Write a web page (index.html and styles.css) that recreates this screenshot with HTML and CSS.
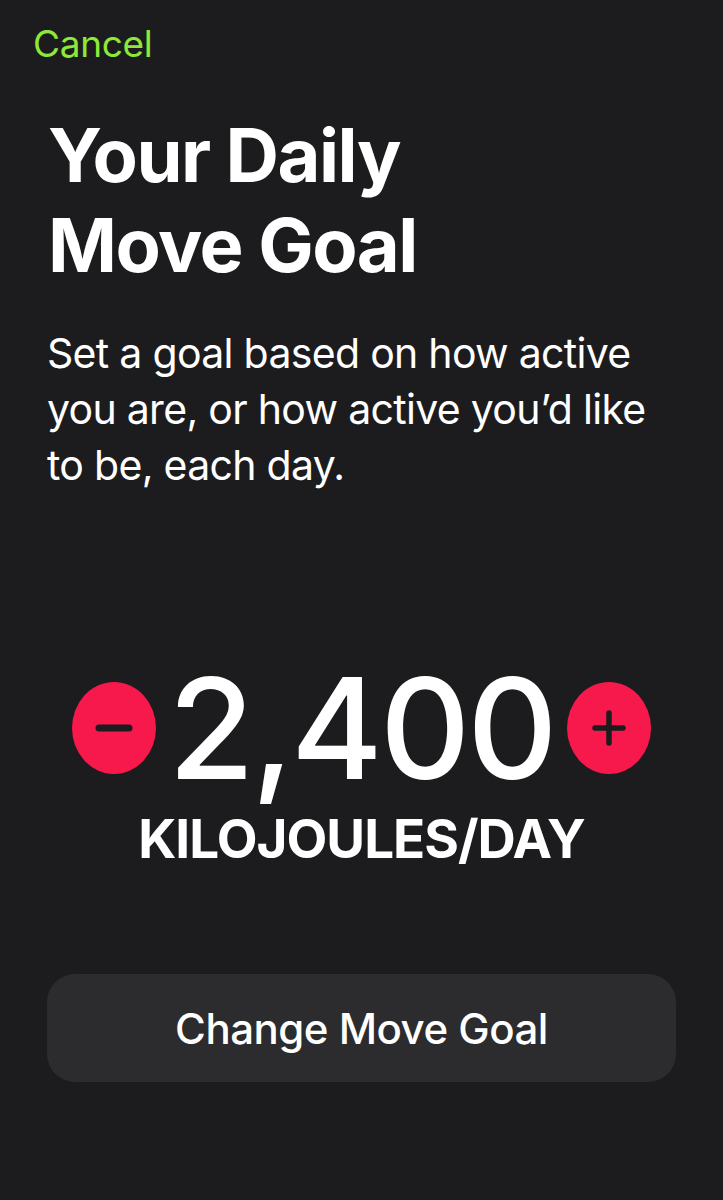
FILE: index.html
```html
<!DOCTYPE html>
<html lang="en">
<head>
    <meta charset="UTF-8">
    <title>Move Goal</title>
    <link rel="stylesheet" href="styles.css">
</head>
<body>
    <div class="screen">
        <a class="cancel" href="javascript:;">Cancel</a>

        <h1 class="goal-title">Your Daily<br>Move Goal</h1>
        <p class="goal-desc">Set a goal based on how active you are, or how active you’d like to be, each day.</p>

        <div class="goal-picker">
            <div class="goal-row">
                <a class="step-btn" href="javascript:;" id="minusBtn">
                    <svg width="40" height="40" viewBox="0 0 40 40"><path d="M5 20H35" stroke="#1c1c1e" stroke-width="7" stroke-linecap="round"/></svg>
                </a>
                <span class="goal-value" id="goalValue">2,400</span>
                <a class="step-btn" href="javascript:;" id="plusBtn">
                    <svg width="40" height="40" viewBox="0 0 40 40"><path d="M6 20H34M20 5V35" stroke="#1c1c1e" stroke-width="5.5" stroke-linecap="round"/></svg>
                </a>
            </div>
            <div class="goal-unit">KILOJOULES/DAY</div>
        </div>

        <div class="change-btn"><a href="javascript:;">Change Move Goal</a></div>
    </div>
</body>
</html>
```

FILE: styles.css
```css
html,
body{
    margin: 0;
    padding: 0;
    background-color: #1c1c1e;
}
a{
    text-decoration: none;
}
.screen{
    width: 723px;
    height: 1200px;
    font-family: Inter, "Noto Sans", sans-serif;
    color: #ffffff;
    overflow: hidden;
}
.cancel{
    display: block;
    margin: 22px 0 0 33px;
    font-size: 37px;
    line-height: 44px;
    color: #8ee83a;
    letter-spacing: -0.3px;
}
.goal-title{
    margin: 44px 0 0 48px;
    font-size: 74px;
    line-height: 90px;
    font-weight: 700;
    letter-spacing: -1.5px;
}
.goal-desc{
    margin: 35px 70px 0 47px;
    font-size: 41px;
    line-height: 56px;
    letter-spacing: -0.7px;
}
.goal-picker{
    margin-top: 165px;
    text-align: center;
}
.goal-row{
    display: flex;
    justify-content: center;
    align-items: center;
    gap: 12px;
}
.step-btn{
    width: 84px;
    height: 92px;
    border-radius: 50%;
    background-color: #f7194c;
    display: flex;
    justify-content: center;
    align-items: center;
}
.goal-value{
    font-size: 140px;
    line-height: 140px;
    font-weight: 500;
    letter-spacing: -3px;
}
.goal-unit{
    margin-top: 13px;
    font-size: 53px;
    line-height: 56px;
    font-weight: 700;
    letter-spacing: -1px;
}
.change-btn{
    margin: 107px 47px 0 47px;
    height: 108px;
    border-radius: 28px;
    background-color: #2c2c2e;
    display: flex;
    justify-content: center;
    align-items: center;
}
.change-btn a{
    color: #ffffff;
    font-size: 42px;
    font-weight: 500;
    letter-spacing: -0.5px;
}
```
